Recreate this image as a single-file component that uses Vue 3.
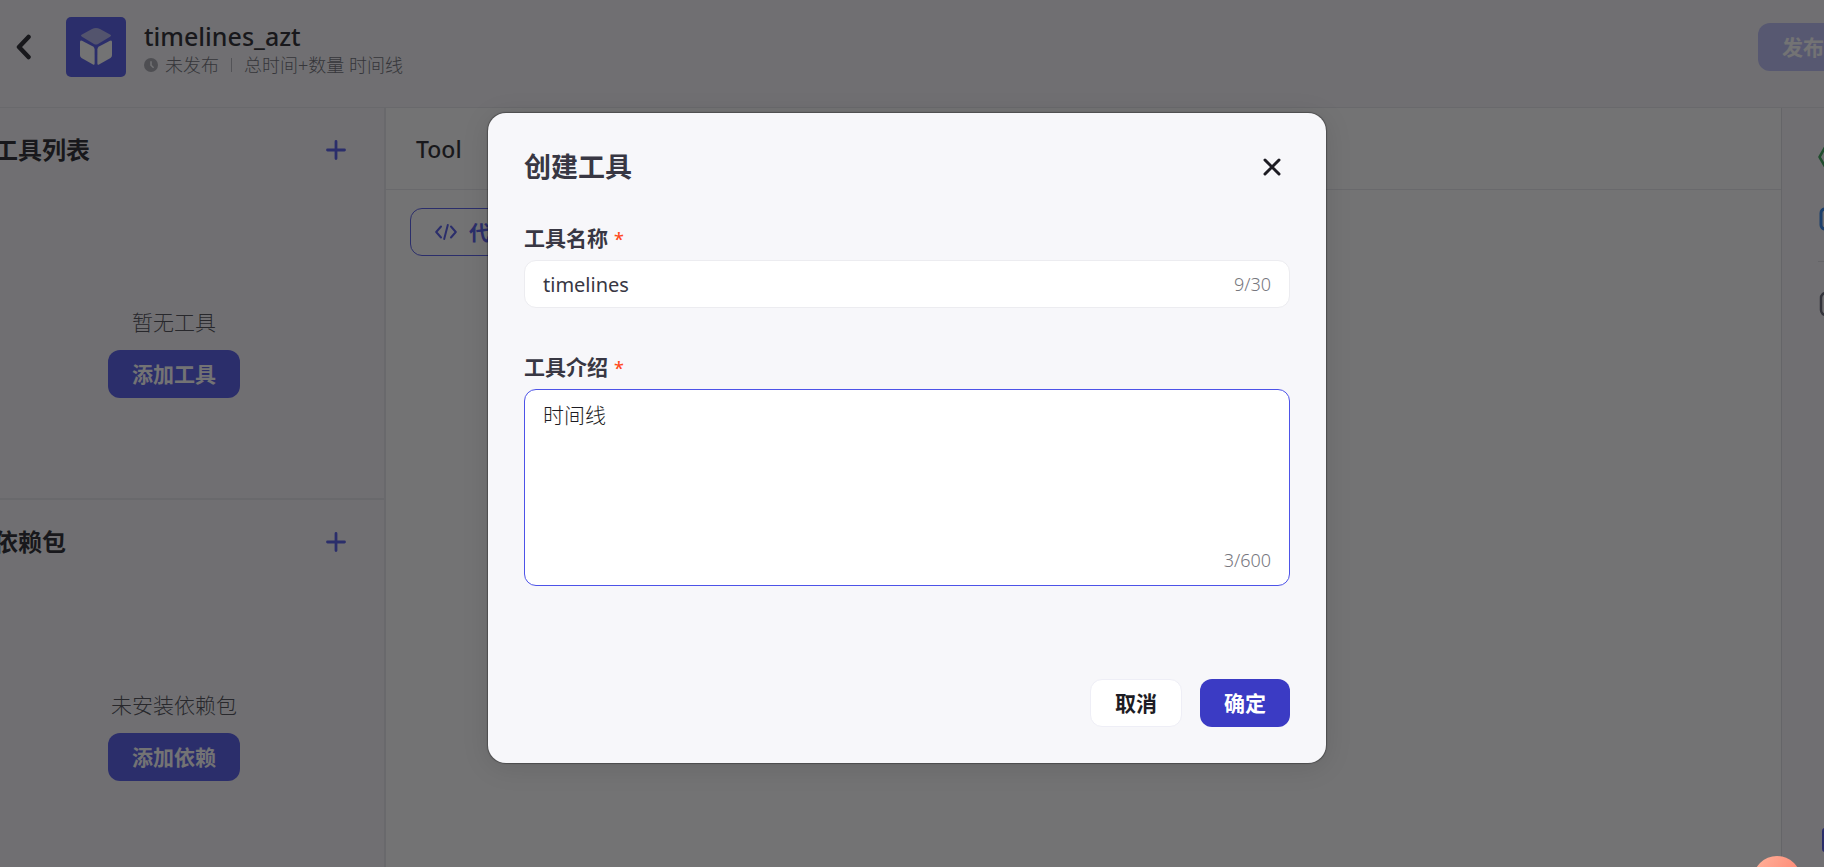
<template>
  <div class="viewport">
    <div class="page">
      <header class="page-header">
        <button class="icon-btn back" type="button" aria-label="返回">
          <svg width="16" height="26" viewBox="0 0 16 26">
            <path d="M12.5 3 3 13l9.500 10" fill="none" stroke="currentColor" stroke-width="4.500" stroke-linecap="round" stroke-linejoin="round" />
          </svg>
        </button>
        <svg class="logo" width="60" height="60" viewBox="0 0 60 60">
          <rect width="60" height="60" rx="5" fill="#4d53e8" />
          <path d="M16 17.500 26 12q4-2 8 0l10 5.500q2 1 0 2.200L32 27q-2 1-4 0l-12-7.300q-2-1.200 0-2.200z" fill="#b0b1ee" />
          <path d="M14 25q0-2.200 2-1.200l11 5.700q1.600 1 1.600 3V46.500q0 1.800-1.600 1L15.500 41Q14 40 14 38z" fill="#fff" />
          <path d="M46 25q0-2.200-2-1.200l-11 5.700q-1.600 1-1.600 3V46.500q0 1.800 1.600 1L44.500 41Q46 40 46 38z" fill="#fff" />
        </svg>
        <div class="info">
          <div class="name">timelines_azt</div>
          <div class="meta">
            <svg width="14" height="14" viewBox="0 0 14 14">
              <circle cx="7" cy="7" r="7" fill="#a3a3ab" />
              <path d="M7 3.200V7.200L9.600 9.800" fill="none" stroke="#f7f7fa" stroke-width="1.600" />
            </svg>
            <span class="status">未发布</span>
            <span class="split"></span>
            <span>总时间+数量 时间线</span>
          </div>
        </div>
        <button class="btn primary publish" type="button" disabled>发布</button>
      </header>

      <div class="body">
        <aside class="sidebar">
          <section v-for="item in sections" :key="item.title" class="section">
            <div class="section-header">
              <h2>{{ item.title }}</h2>
              <button class="icon-btn plus" type="button" :aria-label="item.action">
                <svg width="20" height="20" viewBox="0 0 20 20">
                  <path d="M10 1.500v17M1.500 10h17" stroke="currentColor" stroke-width="2.800" stroke-linecap="round" />
                </svg>
              </button>
            </div>
            <div class="empty">
              <p>{{ item.empty }}</p>
              <button class="btn primary" type="button">{{ item.action }}</button>
            </div>
          </section>
        </aside>

        <main class="main">
          <div class="main-title">Tool</div>
          <div class="toolbar">
            <button class="btn outline" type="button">
              <svg width="22" height="16" viewBox="0 0 22 16">
                <path d="M6 2.500 1.200 8 6 13.500M16 2.500 20.800 8 16 13.500M12.800 1 9.200 15" fill="none" stroke="currentColor" stroke-width="2" stroke-linecap="round" stroke-linejoin="round" />
              </svg>
              <span>代码</span>
            </button>
          </div>
        </main>

        <nav class="rail">
          <button class="icon-btn" type="button" aria-label="运行">
            <svg width="26" height="26" viewBox="0 0 26 26">
              <path d="M7 3.500h12L24.500 13 19 22.500H7L1.500 13z" fill="none" stroke="#32a252" stroke-width="2.500" stroke-linejoin="round" />
            </svg>
          </button>
          <button class="icon-btn" type="button" aria-label="数据">
            <svg width="26" height="26" viewBox="0 0 26 26">
              <rect x="3" y="3" width="20" height="20" rx="4" fill="none" stroke="#2a7fe8" stroke-width="3" />
            </svg>
          </button>
          <span class="rail-line"></span>
          <button class="icon-btn" type="button" aria-label="文档">
            <svg width="26" height="26" viewBox="0 0 26 26">
              <rect x="3" y="2" width="20" height="22" rx="5" fill="none" stroke="#5f5f70" stroke-width="2.500" />
            </svg>
          </button>
          <button class="icon-btn help" type="button" aria-label="帮助">
            <svg width="26" height="26" viewBox="0 0 26 26">
              <rect x="4" y="1" width="22" height="24" rx="3" fill="#4d53e8" />
            </svg>
          </button>
        </nav>
      </div>
    </div>

    <div class="mask">
      <form class="modal" role="dialog" aria-labelledby="modal-title" @submit.prevent>
        <div class="modal-header">
          <h1 id="modal-title">创建工具</h1>
          <button class="icon-btn close" type="button" aria-label="关闭">
            <svg width="18" height="18" viewBox="0 0 18 18">
              <path d="M2 2l14 14M16 2 2 16" stroke="currentColor" stroke-width="3" stroke-linecap="round" />
            </svg>
          </button>
        </div>

        <label class="field-label" for="tool-name">工具名称<span class="required">*</span></label>
        <div class="field">
          <input id="tool-name" v-model="form.name" type="text" maxlength="30" />
          <span class="count">{{ form.name.length }}/30</span>
        </div>

        <label class="field-label" for="tool-desc">工具介绍<span class="required">*</span></label>
        <div class="field area">
          <textarea id="tool-desc" v-model="form.desc" maxlength="600"></textarea>
          <span class="count">{{ form.desc.length }}/600</span>
        </div>

        <div class="modal-footer">
          <button class="btn cancel" type="button">取消</button>
          <button class="btn confirm" type="submit">确定</button>
        </div>
      </form>
    </div>

    <button class="assistant" type="button" aria-label="助手"></button>
  </div>
</template>

<script setup>
import { reactive } from 'vue'

const sections = [
  { title: '工具列表', empty: '暂无工具', action: '添加工具' },
  { title: '依赖包', empty: '未安装依赖包', action: '添加依赖' }
]

const form = reactive({
  name: 'timelines',
  desc: '时间线'
})
</script>

<style>
body {
  overflow: hidden;
}
</style>

<style scoped>
.viewport {
  position: relative;
  height: 100vh;
  overflow: hidden;
  font-family: "Noto Sans", "Noto Sans CJK SC", sans-serif;
  font-size: 21px;
  color: #1d1c23;
}

.viewport * {
  box-sizing: border-box;
}

h1,
h2,
p {
  margin: 0;
}

button,
input,
textarea {
  font: inherit;
  color: inherit;
}

svg {
  display: block;
  flex-shrink: 0;
}

.page {
  display: flex;
  flex-direction: column;
  height: 100%;
  margin: 0 -60px 0 -36px;
  background-color: #f7f6fa;
}

.page-header {
  display: flex;
  align-items: center;
  height: 108px;
  padding: 0 36px 13px 52px;
  border-bottom: 1px solid #e6e6ea;
}

.icon-btn {
  display: flex;
  padding: 0;
  border: none;
  background: none;
}

.back {
  margin-right: 34px;
}

.logo {
  margin-right: 18px;
}

.info {
  flex: 1;
  padding-top: 4px;
}

.name {
  font-size: 25px;
  font-weight: 500;
  line-height: 32px;
}

.meta {
  display: flex;
  align-items: center;
  font-size: 18px;
  font-weight: 300;
  line-height: 26px;
  color: #66666e;
}

.status {
  margin-left: 7px;
}

.split {
  width: 1px;
  height: 14px;
  margin: 0 12px;
  background-color: #b0b0b6;
}

.btn {
  display: flex;
  align-items: center;
  justify-content: center;
  height: 48px;
  padding: 0 24px;
  border: none;
  border-radius: 12px;
  font-size: 21px;
  font-weight: 700;
  line-height: 30px;
}

.primary {
  background-color: #4d53e8;
  color: #fff;
}

.publish {
  background-color: #b9bbf7;
}

.body {
  display: flex;
  flex: 1;
  min-height: 0;
}

.sidebar {
  width: 422px;
  border-right: 2px solid #e6e6ea;
}

.section {
  height: 392px;
  border-bottom: 2px solid #e6e6ea;
}

.section-header {
  display: flex;
  align-items: center;
  justify-content: space-between;
  height: 84px;
  padding: 0 38px 0 30px;
}

.section-header h2 {
  font-size: 24px;
  font-weight: 700;
  line-height: 34px;
}

.plus {
  color: #4d53e8;
}

.empty {
  display: flex;
  flex-direction: column;
  align-items: center;
  gap: 12px;
  padding-top: 114px;
}

.section:last-child .empty {
  padding-top: 105px;
}

.empty p {
  font-size: 21px;
  font-weight: 300;
  line-height: 32px;
  color: #44444c;
}

.main {
  flex: 1;
  background-color: #fff;
}

.main-title {
  height: 82px;
  padding: 0 30px;
  border-bottom: 1px solid #e6e6ea;
  font-size: 23px;
  font-weight: 500;
  line-height: 82px;
}

.toolbar {
  display: flex;
  padding: 18px 24px;
}

.outline {
  gap: 12px;
  border: 1px solid #4d53e8;
  background: none;
  color: #4d53e8;
}

.rail {
  display: flex;
  flex-direction: column;
  align-items: flex-start;
  width: 103px;
  padding: 36px 0 14px 36px;
  gap: 36px;
  border-left: 1px solid #dcdce0;
}

.rail-line {
  width: 32px;
  height: 1px;
  margin: -7px 0;
  background-color: #dcdce0;
}

.help {
  margin-top: auto;
}

.mask {
  position: absolute;
  inset: 0;
  display: flex;
  align-items: center;
  justify-content: center;
  padding: 9px 10px 0 0;
  background-color: rgba(22, 22, 24, 0.6);
}

.modal {
  width: 838px;
  padding: 36px;
  border-radius: 18px;
  background-color: #f7f7fa;
  box-shadow: 0 0 1px 1px rgba(0, 0, 0, 0.3), 0 4px 28px rgba(0, 0, 0, 0.1);
}

.modal-header {
  display: flex;
  align-items: center;
  justify-content: space-between;
  height: 36px;
  margin-bottom: 36px;
  padding-right: 9px;
}

.modal-header h1 {
  font-size: 27px;
  font-weight: 700;
  line-height: 36px;
  color: #383743;
}

.field-label {
  display: block;
  margin-bottom: 5px;
  font-size: 21px;
  font-weight: 700;
  line-height: 34px;
  color: #383743;
}

.required {
  margin-left: 6px;
  font-size: 18px;
  font-weight: 500;
  line-height: 18px;
  color: #ff4a21;
}

.field {
  display: flex;
  align-items: center;
  height: 48px;
  margin-bottom: 42px;
  padding: 0 18px;
  border: 1px solid #ececf0;
  border-radius: 12px;
  background-color: #fff;
  color: #383743;
}

.field input,
.field textarea {
  flex: 1;
  min-width: 0;
  padding: 0;
  border: none;
  outline: none;
  background: none;
}

.field input {
  font-size: 20px;
}

.area {
  flex-direction: column;
  align-items: stretch;
  height: 197px;
  margin-bottom: 93px;
  padding-top: 9px;
  padding-bottom: 12px;
  border-color: #4d53e8;
}

.field textarea {
  resize: none;
  font-size: 21px;
  font-weight: 300;
  line-height: 32px;
  color: #1d1c23;
}

.count {
  font-size: 18px;
  font-weight: 300;
  line-height: 26px;
  text-align: right;
  color: #77777e;
}

.modal-footer {
  display: flex;
  justify-content: flex-end;
  gap: 18px;
}

.cancel {
  border: 1px solid #eeeef6;
  background-color: #fff;
}

.confirm {
  background-color: #3b3bc4;
  color: #fff;
}

.assistant {
  position: absolute;
  right: 23px;
  bottom: -37px;
  width: 48px;
  height: 48px;
  padding: 0;
  border: none;
  border-radius: 50%;
  background: linear-gradient(120deg, #ffb49c, #ff7a68);
}
</style>
